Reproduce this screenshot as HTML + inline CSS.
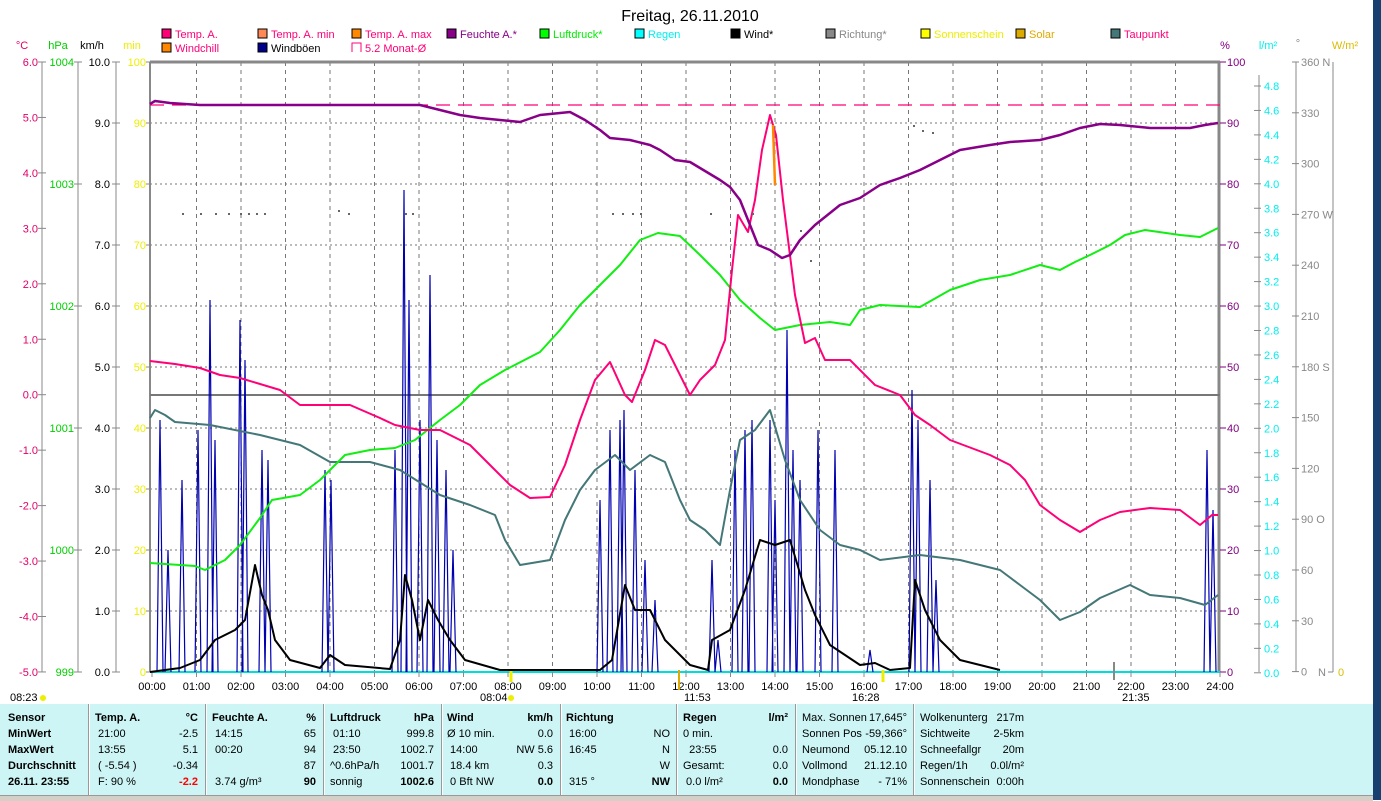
<!DOCTYPE html><html><head><meta charset="utf-8"><style>
body{margin:0;width:1381px;height:800px;overflow:hidden;background:#fff;font-family:"Liberation Sans",sans-serif;position:relative}
svg{position:absolute;left:0;top:0}
svg text{font-family:"Liberation Sans",sans-serif;font-size:11px}
#tbl{position:absolute;left:0;top:704px;width:1373px;height:91px;background:#cdf5f5;font-size:11px}
.c{position:absolute;top:6px;line-height:16px}
.c div{display:flex;justify-content:space-between;white-space:nowrap}
.sep{position:absolute;top:0;width:1px;height:91px;background:#999;border-right:1px solid #fff}
b{font-weight:bold}
</style></head><body>
<svg id="s" width="1381" height="800"></svg>
<div style="position:absolute;left:1373px;top:0;width:8px;height:800px;background:#173f70"></div>
<div style="position:absolute;left:0;top:795px;width:1373px;height:5px;background:#d4d0c8;border-top:1px solid #999"></div>
<div id="tbl">
<div class="c" style="left:8px;width:78px"><div><b>Sensor</b></div><div><b>MinWert</b></div><div><b>MaxWert</b></div><div><b>Durchschnitt</b></div><div><b>26.11. 23:55</b></div></div>
<div class="sep" style="left:88px"></div>
<div class="c" style="left:95px;width:103px"><div><b>Temp. A.</b><b>°C</b></div><div><span>&nbsp;21:00</span><span>-2.5</span></div><div><span>&nbsp;13:55</span><span>5.1</span></div><div><span>&nbsp;( -5.54 )</span><span>-0.34</span></div><div><span>&nbsp;F: 90 %</span><b style="color:#f00">-2.2</b></div></div>
<div class="sep" style="left:205px"></div>
<div class="c" style="left:212px;width:104px"><div><b>Feuchte A.</b><b>%</b></div><div><span>&nbsp;14:15</span><span>65</span></div><div><span>&nbsp;00:20</span><span>94</span></div><div><span></span><span>87</span></div><div><span>&nbsp;3.74 g/m³</span><b>90</b></div></div>
<div class="sep" style="left:323px"></div>
<div class="c" style="left:330px;width:104px"><div><b>Luftdruck</b><b>hPa</b></div><div><span>&nbsp;01:10</span><span>999.8</span></div><div><span>&nbsp;23:50</span><span>1002.7</span></div><div><span>^0.6hPa/h</span><span>1001.7</span></div><div><span>sonnig</span><b>1002.6</b></div></div>
<div class="sep" style="left:441px"></div>
<div class="c" style="left:447px;width:106px"><div><b>Wind</b><b>km/h</b></div><div><span>Ø 10 min.</span><span>0.0</span></div><div><span>&nbsp;14:00</span><span>NW 5.6</span></div><div><span>&nbsp;18.4 km</span><span>0.3</span></div><div><span>&nbsp;0 Bft NW</span><b>0.0</b></div></div>
<div class="sep" style="left:560px"></div>
<div class="c" style="left:566px;width:104px"><div><b>Richtung</b></div><div><span>&nbsp;16:00</span><span>NO</span></div><div><span>&nbsp;16:45</span><span>N</span></div><div><span></span><span>W</span></div><div><span>&nbsp;315 °</span><b>NW</b></div></div>
<div class="sep" style="left:676px"></div>
<div class="c" style="left:683px;width:105px"><div><b>Regen</b><b>l/m²</b></div><div><span>0 min.</span></div><div><span>&nbsp;&nbsp;23:55</span><span>0.0</span></div><div><span>Gesamt:</span><span>0.0</span></div><div><span>&nbsp;0.0 l/m²</span><b>0.0</b></div></div>
<div class="sep" style="left:795px"></div>
<div class="c" style="left:802px;width:105px"><div><span>Max. Sonnen</span><span>17,645°</span></div><div><span>Sonnen Pos</span><span>-59,366°</span></div><div><span>Neumond</span><span>05.12.10</span></div><div><span>Vollmond</span><span>21.12.10</span></div><div><span>Mondphase</span><span>- 71%</span></div></div>
<div class="sep" style="left:913px"></div>
<div class="c" style="left:920px;width:104px"><div><span>Wolkenunterg</span><span>217m</span></div><div><span>Sichtweite</span><span>2-5km</span></div><div><span>Schneefallgr</span><span>20m</span></div><div><span>Regen/1h</span><span>0.0l/m²</span></div><div><span>Sonnenschein</span><span>0:00h</span></div></div>
</div>
<script>
const S=document.getElementById('s');let h='';
const X0=152,W=44.5,Y0=62,Y1=672;
function t(x,y,s,c,a){h+=`<text x="${x}" y="${y}" fill="${c}" text-anchor="${a||'start'}">${s}</text>`}
function L(x1,y1,x2,y2,c,w,d){h+=`<line x1="${x1}" y1="${y1}" x2="${x2}" y2="${y2}" stroke="${c}" stroke-width="${w||1}" ${d?`stroke-dasharray="${d}"`:''}/>`}
h+=`<text x="690" y="21" fill="#000" text-anchor="middle" style="font-size:16px">Freitag, 26.11.2010</text>`;
for(let i=1;i<24;i++)L(X0+i*W,62,X0+i*W,672,'#777',1,'4,4');
for(let i=1;i<10;i++)L(150,62+i*61,1220,62+i*61,'#777',1,'2,3');
L(150,62,1220,62,'#888',3);L(150,62,150,672,'#888',2);L(1219,62,1219,672,'#888',3);
L(150,395,1220,395,'#777',2);
L(150,105,1220,105,'#f07',1.2,'14,8');
L(150,672,1220,672,'#0dd',2);
L(42,62,42,672,'#888');L(78,62,78,672,'#888');L(116,62,116,672,'#888');
const cl=['6.0','5.0','4.0','3.0','2.0','1.0','0.0','-1.0','-2.0','-3.0','-4.0','-5.0'];
cl.forEach((v,i)=>{let y=62+i*55.45;t(38,y+4,v,'#e0006a','end');L(38,y,46,y,'#888')});
['1004','1003','1002','1001','1000','999'].forEach((v,i)=>{let y=62+i*122;t(74,y+4,v,'#0c0','end');L(74,y,82,y,'#888')});
for(let i=0;i<=10;i++){let y=62+i*61;t(110,y+4,(10-i).toFixed(1),'#000','end');L(112,y,120,y,'#888');t(146,y+4,100-i*10,'#ee0','end');L(146,y,150,y,'#888')}
t(22,49,'°C','#e0006a','middle');t(58,49,'hPa','#0c0','middle');t(92,49,'km/h','#000','middle');t(132,49,'min','#ee0','middle');
for(let i=0;i<=10;i++){let y=62+i*61;L(1220,y,1226,y,'#800080');t(1227,y+4,100-i*10,'#800080')}
L(1259,75,1259,672,'#888');L(1296,62,1296,672,'#888');L(1333,62,1333,672,'#888');
for(let i=0;i<=24;i++){let v=Math.abs(4.8-i*0.2),y=86+i*24.45;L(1254,y,1261,y,'#888');t(1264,y+4,v.toFixed(1),'#0ee')}
const dl=['360 N','330','300','270 W','240','210','180 S','150','120','90  O','60','30','0'];
dl.forEach((v,i)=>{let y=62+i*50.8;L(1292,y,1299,y,'#888');t(1301,y+4,v,'#888')});
t(1318,676,'N','#888');L(1328,672,1333,672,'#888');t(1338,676,'0','#db0');
t(1225,49,'%','#800080','middle');t(1268,49,'l/m²','#0ee','middle');t(1298,47,'°','#888','middle');t(1345,49,'W/m²','#db0','middle');
const lg=[[162,38,'#f07','Temp. A.','#f07'],[258,38,'#f85','Temp. A. min','#f07'],[352,38,'#f80','Temp. A. max','#f07'],[447,38,'#808','Feuchte A.*','#808'],[540,38,'#0f0','Luftdruck*','#0e0'],[635,38,'#0ff','Regen','#0ee'],[731,38,'#000','Wind*','#000'],[826,38,'#888','Richtung*','#888'],[921,38,'#ff0','Sonnenschein','#ee0'],[1016,38,'#da0','Solar','#da0'],[1111,38,'#477','Taupunkt','#f07'],[162,52,'#f80','Windchill','#f07'],[258,52,'#008','Windböen','#000']];
lg.forEach(a=>{h+=`<rect x="${a[0]}" y="${a[1]-9}" width="9" height="9" fill="${a[2]}" stroke="#000"/>`;t(a[0]+13,a[1],a[3],a[4])});
h+=`<path d="M352,52V43H361V52" fill="none" stroke="#f07"/>`;t(365,52,'5.2 Monat-Ø','#f07');
for(let i=0;i<=24;i++){let x=X0+i*W;L(x,672,x,677,'#888');t(x,690,(i<10?'0':'')+i+':00','#000','middle')}
t(10,701,'08:23','#000');h+='<circle cx="43" cy="698" r="3" fill="#ee0"/>';
t(480,701,'08:04','#000');h+='<circle cx="511" cy="698" r="3" fill="#ee0"/>';L(511,670,511,682,'#ee0',3);
t(684,701,'11:53','#000');L(679,670,679,690,'#da0',2);
t(852,701,'16:28','#000');L(883,670,883,682,'#ee0',3);
t(1122,701,'21:35','#000');L(1114,662,1114,680,'#888',2);
function P(pts,c,w){h+=`<polyline points="${pts}" fill="none" stroke="${c}" stroke-width="${w||2}" stroke-linejoin="round"/>`}
const g=[[160,420],[168,550],[182,480],[198,430],[210,300],[215,440],[240,320],[245,360],[262,450],[268,460],[325,470],[331,480],[395,450],[404,190],[409,300],[420,420],[430,275],[437,440],[446,470],[453,550],[600,500],[610,430],[620,420],[624,410],[635,470],[645,560],[655,600],[712,560],[718,640],[735,450],[745,430],[752,420],[770,420],[775,500],[787,330],[793,450],[800,480],[818,430],[835,450],[870,650],[912,390],[918,420],[930,480],[936,580],[1207,450],[1213,510]];
let gp='';g.forEach(a=>{gp+=`M${a[0]-3},672L${a[0]},${a[1]}L${a[0]+3},672 `});
h+=`<path d="${gp}" fill="none" stroke="#0000b0" stroke-width="1.2"/>`;
P('150,672 180,668 200,660 215,640 235,630 245,620 255,565 262,595 268,610 275,640 290,660 320,668 330,655 345,665 390,669 400,640 405,575 412,600 420,640 428,600 438,620 450,640 465,660 500,670 600,670 612,660 625,585 635,610 650,610 665,640 690,665 708,670 712,640 730,630 745,590 760,540 775,545 790,540 805,590 815,615 830,645 860,665 875,663 890,670 910,668 915,580 925,610 940,640 960,660 1000,670','#000',2);
P('150,418 155,410 165,415 175,422 210,425 260,435 300,445 330,462 370,462 400,470 440,495 470,505 495,515 505,540 520,565 550,560 565,520 580,490 595,470 615,455 630,470 650,455 665,462 680,500 690,520 705,530 720,545 730,490 740,440 755,430 770,410 785,460 800,500 820,530 840,545 860,550 880,560 920,555 960,560 1000,570 1020,585 1040,600 1060,620 1080,612 1100,598 1130,585 1150,595 1180,598 1205,605 1218,595','#477',2);
P('150,563 195,566 205,570 225,560 240,545 260,518 272,500 300,495 320,480 345,455 370,450 395,448 415,440 440,420 460,405 480,385 505,370 540,352 560,330 580,305 600,285 620,265 640,240 658,233 680,236 700,255 720,275 740,300 760,318 775,330 800,325 830,322 850,325 860,310 880,305 920,307 950,290 980,280 1010,275 1040,265 1060,270 1075,262 1090,255 1110,245 1125,235 1145,230 1180,235 1200,237 1218,228','#1e1',2);
P('150,361 175,364 200,368 220,375 240,378 280,390 300,405 350,405 380,418 395,425 420,430 440,430 470,445 495,470 510,485 530,498 550,497 565,465 580,420 595,380 610,362 625,395 632,402 645,370 655,340 665,345 675,365 690,395 700,380 715,365 725,340 732,270 738,215 748,232 755,200 762,150 770,115 776,135 783,200 795,295 805,343 815,338 825,360 850,360 875,385 900,395 915,415 930,425 950,440 990,455 1010,465 1025,480 1040,505 1060,520 1080,532 1100,520 1120,512 1150,508 1180,510 1200,525 1212,515 1218,515','#f07',2);
P('773,125 775,185','#f80',2.5);
P('150,104 155,101 170,103 200,105 300,105 420,105 440,110 460,115 480,118 500,120 520,122 540,115 570,112 585,120 600,130 610,138 630,140 650,145 660,150 675,160 690,162 700,168 720,180 730,187 740,200 748,220 758,245 770,250 782,258 790,255 800,240 815,225 840,205 860,198 880,185 900,178 920,170 940,160 960,150 990,145 1010,142 1040,140 1060,135 1080,128 1100,124 1120,125 1150,128 1190,128 1205,125 1218,123','#808',2.5);
[[182,213],[200,213],[215,213],[228,213],[240,213],[248,213],[256,213],[264,213],[338,210],[348,213],[405,213],[412,213],[612,213],[622,213],[632,213],[640,213],[710,213],[913,125],[922,130],[932,132],[752,213],[800,230],[810,260]].forEach(a=>h+=`<rect x="${a[0]}" y="${a[1]}" width="2" height="2" fill="#666"/>`);
S.innerHTML=h;
</script>
</body></html>
